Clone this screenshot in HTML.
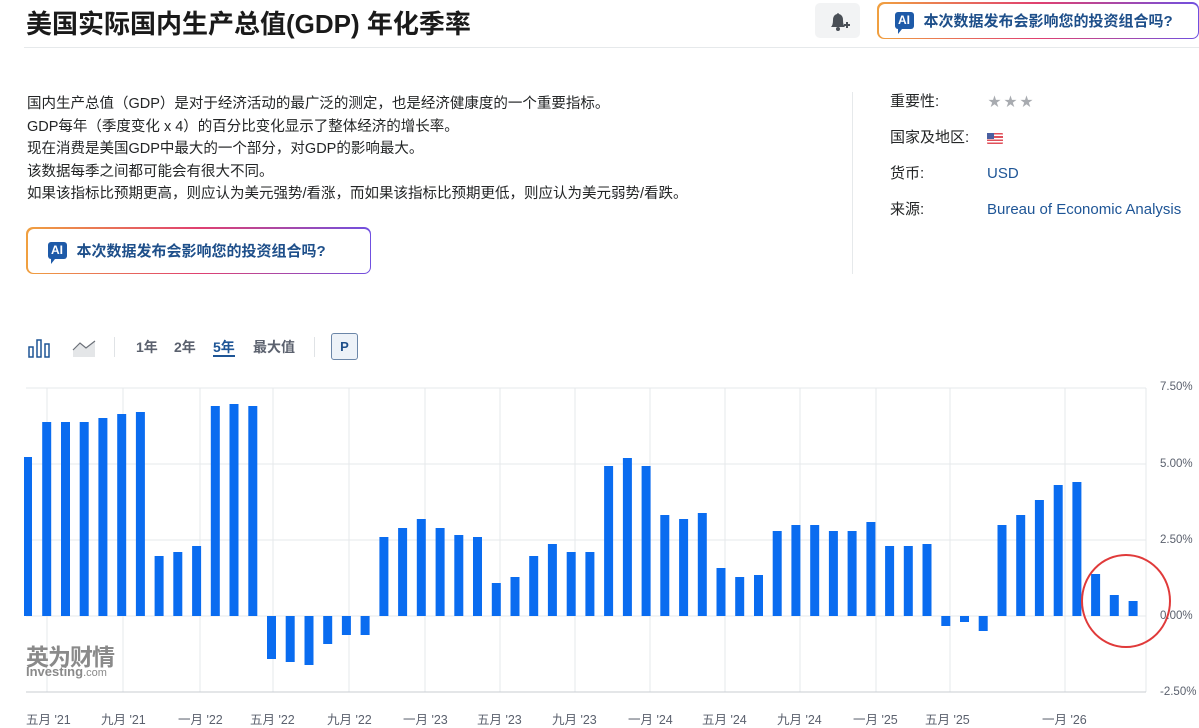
<!DOCTYPE html>
<html><head><meta charset="utf-8"><style>
body{margin:0;width:1199px;height:728px;overflow:hidden;background:#fff;font-family:"Liberation Sans","Noto Sans CJK SC",sans-serif;color:#232526;position:relative}
.abs{position:absolute}
h1{position:absolute;left:26px;top:4px;margin:0;font-size:26px;font-weight:700;color:#1a1a1a;white-space:nowrap}
.hr{position:absolute;left:24px;top:47px;width:1175px;height:1px;background:#e6e9eb}
.bell{left:815px;top:3px;width:45px;height:35px;background:#f2f3f4;border-radius:5px}
.aib{border-radius:7px;padding:1.5px;background:linear-gradient(90deg,#f0a040,#e04070 50%,#7050e0)}
.aib>div{background:#fff;border-radius:6px;height:100%;display:flex;align-items:center;color:#1e4f8a;font-weight:700;font-size:15px;white-space:nowrap}
.ai{display:inline-block;width:19px;height:17px;background:#1e5aa8;color:#fff;font-size:12px;font-weight:700;border-radius:3px;text-align:center;line-height:17px;margin-right:10px;position:relative}
.ai:after{content:"";position:absolute;left:3px;bottom:-5px;border-left:4px solid #1e5aa8;border-bottom:5px solid transparent}
.desc{left:27px;top:93px;font-size:14.5px;line-height:22.5px;color:#232526}
.vl{left:852px;top:92px;width:1px;height:182px;background:#e6e9eb}
.lab{font-size:15px;line-height:20px;color:#232526;left:890px}
.val{font-size:15px;line-height:20px;color:#1e5596;left:987px;white-space:nowrap}
.tb{top:337px;font-size:14px;color:#5b616e;font-weight:700}
.yl{left:1160px;font-size:11.5px;color:#5b616e}
.xl{top:709px;font-size:12.5px;color:#5b616e;white-space:nowrap}
</style></head><body>
<h1>美国实际国内生产总值(GDP) 年化季率</h1>
<div class="hr"></div>
<div class="abs bell"><svg width="45" height="35"><path d="M16 24 q2-2 2-7 q0-5 4-6 q1-2 2 0 q4 1 4 6 q0 5 2 7z" fill="#4a4f56"/><circle cx="23" cy="26" r="2" fill="#4a4f56"/><path d="M29 22h6M32 19v6" stroke="#4a4f56" stroke-width="2"/></svg></div>
<div class="abs aib" style="left:877px;top:2px;width:322px;height:37px;box-sizing:border-box"><div style="padding-left:16px"><span class="ai">AI</span>本次数据发布会影响您的投资组合吗?</div></div>
<div class="abs desc">国内生产总值（GDP）是对于经济活动的最广泛的测定，也是经济健康度的一个重要指标。<br>GDP每年（季度变化 x 4）的百分比变化显示了整体经济的增长率。<br>现在消费是美国GDP中最大的一个部分，对GDP的影响最大。<br>该数据每季之间都可能会有很大不同。<br>如果该指标比预期更高，则应认为美元强势/看涨，而如果该指标比预期更低，则应认为美元弱势/看跌。</div>
<div class="abs aib" style="left:26px;top:227px;width:345px;height:47px;box-sizing:border-box"><div style="padding-left:20px"><span class="ai">AI</span>本次数据发布会影响您的投资组合吗?</div></div>
<div class="abs vl"></div>
<div class="abs lab" style="top:92px">重要性:</div>
<div class="abs" style="left:988px;top:93px;color:#a8abb0;font-size:13px;letter-spacing:3px;line-height:18px">★★★</div>
<div class="abs lab" style="top:128px">国家及地区:</div>
<div class="abs" style="left:987px;top:133px;width:16px;height:11px;background:repeating-linear-gradient(#e0505a 0 1.6px,#fff 1.6px 3.2px);border-radius:1px"><div style="width:7px;height:6px;background:#4a5fa0"></div></div>
<div class="abs lab" style="top:164px">货币:</div>
<div class="abs val" style="top:164px">USD</div>
<div class="abs lab" style="top:200px">来源:</div>
<div class="abs val" style="top:200px">Bureau of Economic Analysis</div>
<svg class="abs" style="left:28px;top:338px" width="24" height="20"><g fill="none" stroke="#1e5596" stroke-width="1.5"><rect x="1" y="9" width="4" height="10"/><rect x="9" y="2" width="4" height="17"/><rect x="17" y="6" width="4" height="13"/></g></svg>
<svg class="abs" style="left:72px;top:338px" width="24" height="20"><path d="M1 19V12L8 5 14 10 23 3V19Z" fill="#e4e6e8"/><path d="M1 12L8 5 14 10 23 3" fill="none" stroke="#6b7078" stroke-width="1.2"/></svg>
<div class="abs" style="left:114px;top:337px;width:1px;height:20px;background:#e0e3e6"></div>
<div class="abs tb" style="left:136px">1年</div>
<div class="abs tb" style="left:174px">2年</div>
<div class="abs tb" style="left:213px;color:#1e5596">5年</div>
<div class="abs" style="left:213px;top:355px;width:22px;height:2px;background:#1e5596"></div>
<div class="abs tb" style="left:253px">最大值</div>
<div class="abs" style="left:314px;top:337px;width:1px;height:20px;background:#e0e3e6"></div>
<div class="abs" style="left:331px;top:333px;width:27px;height:27px;border:1px solid #6b86a8;background:#edf2f8;border-radius:3px;box-sizing:border-box;text-align:center;line-height:25px;font-size:13px;font-weight:700;color:#1e4f8a">P</div>
<svg class="abs" style="left:0;top:380px" width="1199" height="330">
<g stroke="#e6e8eb" stroke-width="1">
<line x1="26" y1="8" x2="1146" y2="8"/><line x1="26" y1="84" x2="1146" y2="84"/><line x1="26" y1="160" x2="1146" y2="160"/><line x1="26" y1="236" x2="1146" y2="236"/>
<line x1="47" y1="8" x2="47" y2="312"/><line x1="123" y1="8" x2="123" y2="312"/><line x1="200" y1="8" x2="200" y2="312"/><line x1="273" y1="8" x2="273" y2="312"/><line x1="349" y1="8" x2="349" y2="312"/><line x1="425" y1="8" x2="425" y2="312"/><line x1="500" y1="8" x2="500" y2="312"/><line x1="575" y1="8" x2="575" y2="312"/><line x1="650" y1="8" x2="650" y2="312"/><line x1="725" y1="8" x2="725" y2="312"/><line x1="800" y1="8" x2="800" y2="312"/><line x1="876" y1="8" x2="876" y2="312"/><line x1="950" y1="8" x2="950" y2="312"/><line x1="1065" y1="8" x2="1065" y2="312"/><line x1="1146" y1="8" x2="1146" y2="312"/>
</g>
<line x1="26" y1="312" x2="1146" y2="312" stroke="#c8ccd2"/>
</svg>
<svg class="abs" style="left:0;top:0" width="1199" height="728">
<g fill="#0a6cf0">
<rect x="24" y="457" width="8" height="159"/><rect x="42.2" y="422" width="9" height="194"/><rect x="61" y="422" width="9" height="194"/><rect x="79.7" y="422" width="9" height="194"/><rect x="98.4" y="418" width="9" height="198"/><rect x="117.2" y="414" width="9" height="202"/><rect x="135.9" y="412" width="9" height="204"/><rect x="154.6" y="556" width="9" height="60"/><rect x="173.3" y="552" width="9" height="64"/><rect x="192.1" y="546" width="9" height="70"/><rect x="210.8" y="406" width="9" height="210"/><rect x="229.5" y="404" width="9" height="212"/><rect x="248.3" y="406" width="9" height="210"/>
<rect x="267" y="616" width="9" height="43"/><rect x="285.7" y="616" width="9" height="46"/><rect x="304.5" y="616" width="9" height="49"/><rect x="323.2" y="616" width="9" height="28"/><rect x="341.9" y="616" width="9" height="19"/><rect x="360.6" y="616" width="9" height="19"/>
<rect x="379.4" y="537" width="9" height="79"/><rect x="398.1" y="528" width="9" height="88"/><rect x="416.8" y="519" width="9" height="97"/><rect x="435.6" y="528" width="9" height="88"/><rect x="454.3" y="535" width="9" height="81"/><rect x="473" y="537" width="9" height="79"/><rect x="491.8" y="583" width="9" height="33"/><rect x="510.5" y="577" width="9" height="39"/><rect x="529.2" y="556" width="9" height="60"/><rect x="547.9" y="544" width="9" height="72"/><rect x="566.7" y="552" width="9" height="64"/><rect x="585.4" y="552" width="9" height="64"/><rect x="604.1" y="466" width="9" height="150"/><rect x="622.9" y="458" width="9" height="158"/><rect x="641.6" y="466" width="9" height="150"/><rect x="660.3" y="515" width="9" height="101"/><rect x="679.1" y="519" width="9" height="97"/><rect x="697.8" y="513" width="9" height="103"/><rect x="716.5" y="568" width="9" height="48"/><rect x="735.2" y="577" width="9" height="39"/><rect x="754" y="575" width="9" height="41"/><rect x="772.7" y="531" width="9" height="85"/><rect x="791.4" y="525" width="9" height="91"/><rect x="810.2" y="525" width="9" height="91"/><rect x="828.9" y="531" width="9" height="85"/><rect x="847.6" y="531" width="9" height="85"/><rect x="866.4" y="522" width="9" height="94"/><rect x="885.1" y="546" width="9" height="70"/><rect x="903.8" y="546" width="9" height="70"/><rect x="922.5" y="544" width="9" height="72"/>
<rect x="941.3" y="616" width="9" height="10"/><rect x="960" y="616" width="9" height="6"/><rect x="978.7" y="616" width="9" height="15"/>
<rect x="997.5" y="525" width="9" height="91"/><rect x="1016.2" y="515" width="9" height="101"/><rect x="1034.9" y="500" width="9" height="116"/><rect x="1053.7" y="485" width="9" height="131"/><rect x="1072.4" y="482" width="9" height="134"/><rect x="1091.1" y="574" width="9" height="42"/><rect x="1109.8" y="595" width="9" height="21"/><rect x="1128.6" y="601" width="9" height="15"/>
</g>
<ellipse cx="1126" cy="601" rx="44" ry="46" fill="none" stroke="#e03a3a" stroke-width="2"/>
</svg>
<div class="abs yl" style="top:381px">7.50%</div>
<div class="abs yl" style="top:458px">5.00%</div>
<div class="abs yl" style="top:534px">2.50%</div>
<div class="abs yl" style="top:610px">0.00%</div>
<div class="abs yl" style="top:686px">-2.50%</div>
<div class="abs" style="left:26px;top:638px;font-size:23px;font-weight:700;color:#8a8a8a;letter-spacing:-1px">英为财情</div>
<div class="abs" style="left:26px;top:664px;font-size:13px;font-weight:700;color:#8a8a8a">Investing<span style="font-weight:400;font-size:11px">.com</span></div>
<div class="abs xl" style="left:26px">五月 '21</div>
<div class="abs xl" style="left:101px">九月 '21</div>
<div class="abs xl" style="left:178px">一月 '22</div>
<div class="abs xl" style="left:250px">五月 '22</div>
<div class="abs xl" style="left:327px">九月 '22</div>
<div class="abs xl" style="left:403px">一月 '23</div>
<div class="abs xl" style="left:477px">五月 '23</div>
<div class="abs xl" style="left:552px">九月 '23</div>
<div class="abs xl" style="left:628px">一月 '24</div>
<div class="abs xl" style="left:702px">五月 '24</div>
<div class="abs xl" style="left:777px">九月 '24</div>
<div class="abs xl" style="left:853px">一月 '25</div>
<div class="abs xl" style="left:925px">五月 '25</div>
<div class="abs xl" style="left:1042px">一月 '26</div>
</body></html>
